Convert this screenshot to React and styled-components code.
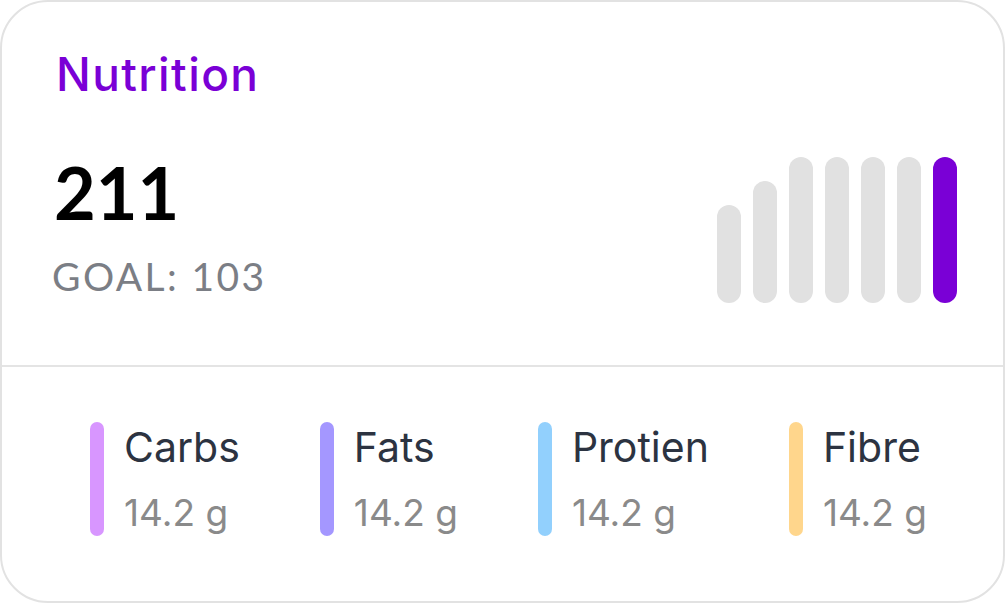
import React from "react";
import styled, { createGlobalStyle } from "styled-components";

const GlobalStyle = createGlobalStyle`
  body {
    margin: 0;
    background: #ffffff;
    font-family: "Inter", "Liberation Sans", sans-serif;
  }
`;

const bars = [98, 122, 146, 146, 146, 146, 146];

const macros = [
  { label: "Carbs", value: "14.2 g", color: "#d896ff" },
  { label: "Fats", value: "14.2 g", color: "#a497ff" },
  { label: "Protien", value: "14.2 g", color: "#92d0fd" },
  { label: "Fibre", value: "14.2 g", color: "#ffd68c" },
];

const App = () => {
  return (
    <>
      <GlobalStyle />
      <Card>
        <Top>
          <Title>Nutrition</Title>
          <SummaryRow>
            <Totals>
              <Calories>211</Calories>
              <Goal>GOAL: 103</Goal>
            </Totals>
            <Bars>
              {bars.map((h, i) => (
                <Bar
                  key={i}
                  $active={i === bars.length - 1}
                  style={{ height: `${h}px` }}
                />
              ))}
            </Bars>
          </SummaryRow>
        </Top>
        <Macros>
          {macros.map((m) => (
            <Macro key={m.label}>
              <Pill $color={m.color} />
              <MacroText>
                <MacroLabel>{m.label}</MacroLabel>
                <MacroValue>{m.value}</MacroValue>
              </MacroText>
            </Macro>
          ))}
        </Macros>
      </Card>
    </>
  );
};

const Card = styled.div`
  width: 1005px;
  height: 603px;
  box-sizing: border-box;
  border: 2px solid #e2e2e2;
  border-radius: 48px;
  display: flex;
  flex-direction: column;
  overflow: hidden;
`;
const Top = styled.div`
  height: 365px;
  box-sizing: border-box;
  border-bottom: 2px solid #e4e4e4;
  padding: 44px 46px 0 50px;
  display: flex;
  flex-direction: column;
`;
const Title = styled.h2`
  margin: 0 0 0 4px;
  font-size: 46px;
  line-height: 56px;
  font-weight: 500;
  color: #7a00d6;
  letter-spacing: 1.4px;
`;
const SummaryRow = styled.div`
  display: flex;
  justify-content: space-between;
  align-items: flex-end;
  margin-top: 52px;
`;
const Totals = styled.div`
  display: flex;
  flex-direction: column;
  padding-bottom: 5px;
`;
const Calories = styled.div`
  font-family: "Lato", "Liberation Sans", sans-serif;
  font-size: 72px;
  font-weight: 700;
  line-height: 76px;
  color: #000000;
  margin-left: 2px;
`;
const Goal = styled.div`
  font-family: "Lato", "Liberation Sans", sans-serif;
  font-size: 39px;
  line-height: 44px;
  letter-spacing: 2.4px;
  margin-top: 24px;
  color: #7b7e85;
`;
const Bars = styled.div`
  display: flex;
  align-items: flex-end;
  gap: 12px;
  height: 146px;
`;
const Bar = styled.div`
  width: 24px;
  border-radius: 12px;
  background: ${(p) => (p.$active ? "#7a00d6" : "#e1e1e1")};
`;
const Macros = styled.div`
  flex: 1;
  display: flex;
  justify-content: center;
  align-items: center;
  gap: 80px;
  padding: 0 0 10px 12px;
`;
const Macro = styled.div`
  display: flex;
  gap: 20px;
`;
const Pill = styled.div`
  width: 14px;
  height: 114px;
  border-radius: 7px;
  background: ${(p) => p.$color};
`;
const MacroText = styled.div`
  display: flex;
  flex-direction: column;
  justify-content: space-between;
`;
const MacroLabel = styled.div`
  font-size: 41px;
  line-height: 50px;
  color: #2c3341;
`;
const MacroValue = styled.div`
  font-size: 37px;
  line-height: 46px;
  color: #8a8a8a;
`;

export default App;
